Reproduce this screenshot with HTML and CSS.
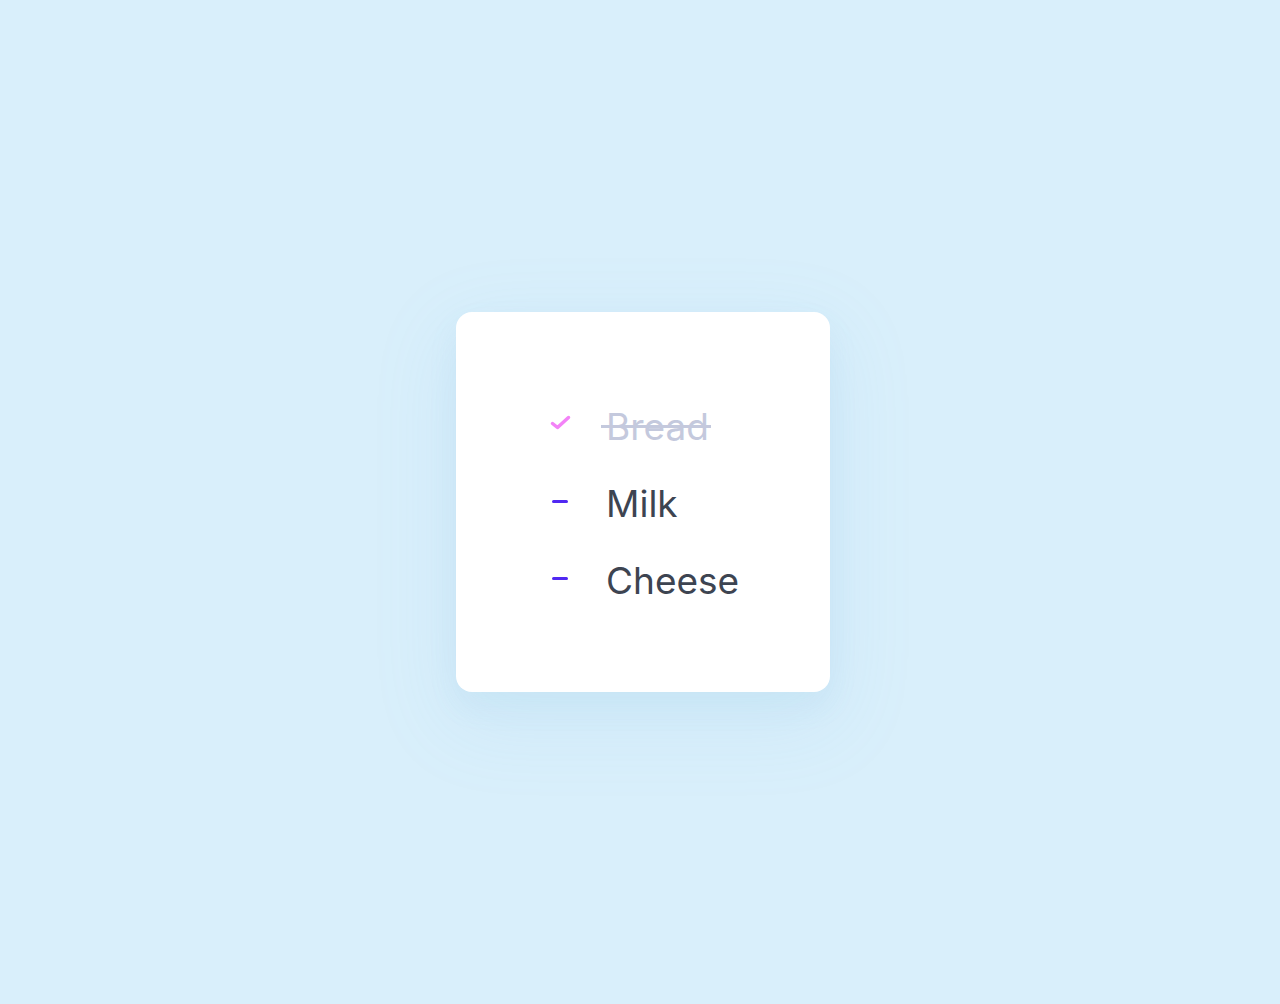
FILE: index.html
```html
<!DOCTYPE html>
<html>
<head>
<meta charset="utf-8">
<link rel="stylesheet" href="styles.css">
</head>
<body>
<main class="stage">
  <section class="card">
    <ul class="list">
      <li class="item done">
        <span class="mark">
          <svg width="22" height="18" viewBox="0 0 22 18"><path d="M2.5 9.5 L7.5 13.5 L18.5 3.5" fill="none" stroke="#f383f7" stroke-width="3.5" stroke-linecap="round" stroke-linejoin="round"/></svg>
        </span>
        <span class="label">Bread</span>
      </li>
      <li class="item">
        <span class="mark"><span class="dash"></span></span>
        <span class="label">Milk</span>
      </li>
      <li class="item">
        <span class="mark"><span class="dash"></span></span>
        <span class="label">Cheese</span>
      </li>
    </ul>
  </section>
</main>
</body>
</html>
```

FILE: styles.css
```css
html, body {
  margin: 0;
  padding: 0;
}
body {
  background: #d9effb;
  font-family: Inter, "Noto Sans", "Liberation Sans", sans-serif;
}
.stage {
  height: 1004px;
  box-sizing: border-box;
  padding-left: 6px;
  display: flex;
  align-items: center;
  justify-content: center;
}
.card {
  width: 374px;
  height: 380px;
  box-sizing: border-box;
  background: #ffffff;
  border-radius: 16px;
  padding-left: 95px;
  padding-top: 4px;
  display: flex;
  align-items: center;
  box-shadow: 0 14px 30px rgba(110, 175, 215, 0.09), 0 25px 80px 10px rgba(120, 185, 225, 0.1);
}
.list {
  list-style: none;
  margin: 0;
  padding: 0;
  display: flex;
  flex-direction: column;
}
.item {
  height: 77px;
  display: flex;
  align-items: center;
}
.mark {
  width: 55px;
  flex: none;
  display: flex;
  align-items: center;
  height: 20px;
  margin-top: -8px;
}
.mark svg {
  display: block;
  margin-left: -1px;
}
.dash {
  display: block;
  width: 16px;
  height: 3px;
  border-radius: 2px;
  background: #5028f2;
  margin-left: 1px;
  margin-top: 2px;
}
.label {
  font-size: 37px;
  line-height: 44px;
  color: #3d4451;
}
.done .label {
  color: #c4c9dd;
  position: relative;
}
.done .label::after {
  content: "";
  position: absolute;
  left: -5px;
  right: -2px;
  top: 20px;
  height: 3px;
  background: #c4c9dd;
}
```
